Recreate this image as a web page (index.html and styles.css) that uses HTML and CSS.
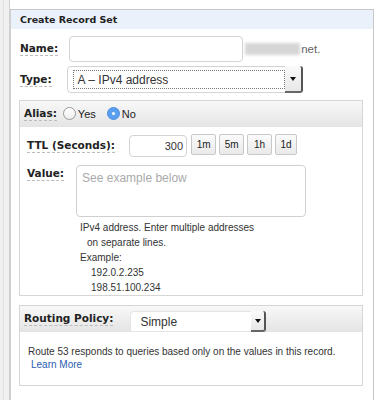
FILE: index.html
```html
<!DOCTYPE html>
<html>
<head>
<meta charset="utf-8">
<link rel="stylesheet" href="styles.css">
</head>
<body>
<div class="page">
  <div class="side"><div class="side-line"></div></div>
  <div class="main">
    <div class="panel">
      <div class="panel-head">Create Record Set</div>
      <div class="row row-name">
        <span class="label lbl-name">Name:</span>
        <div class="input name-input"></div>
        <div class="blur"></div>
        <span class="suffix">net.</span>
      </div>
      <div class="row row-type">
        <span class="label lbl-type">Type:</span>
        <div class="select type-select">
          <div class="select-text"><span class="focus">A – IPv4 address</span></div>
          <div class="select-arrow"><span class="tri"></span></div>
        </div>
      </div>
      <div class="box alias-box">
        <div class="box-head">
          <span class="label">Alias:</span>
          <span class="radio"></span><span class="rtext">Yes</span>
          <span class="radio on"></span><span class="rtext">No</span>
        </div>
        <div class="box-body">
          <div class="ttl-row">
            <span class="label lbl-ttl">TTL (Seconds):</span>
            <div class="input ttl-input">300</div>
            <div class="btns">
              <span class="btn">1m</span>
              <span class="btn">5m</span>
              <span class="btn">1h</span>
              <span class="btn b1d">1d</span>
            </div>
          </div>
          <div class="value-row">
            <span class="label lbl-value">Value:</span>
            <div class="value-col">
              <div class="textarea">See example below</div>
              <div class="help">
                <div class="h1">IPv4 address. Enter multiple addresses</div>
                <div class="h2">on separate lines.</div>
                <div class="h3">Example:</div>
                <div class="h4">192.0.2.235</div>
                <div class="h5">198.51.100.234</div>
              </div>
            </div>
          </div>
        </div>
      </div>
      <div class="box routing-box">
        <div class="box-head rhead">
          <span class="label lbl-routing">Routing Policy:</span>
          <div class="select routing-select">
            <div class="select-text">Simple</div>
            <div class="select-arrow"><span class="tri"></span></div>
          </div>
        </div>
        <div class="box-body rbody">
          <div class="rtext-line">Route 53 responds to queries based only on the values in this record.</div>
          <a class="learn" href="#">Learn More</a>
        </div>
      </div>
    </div>
  </div>
</div>
</body>
</html>
```

FILE: styles.css
```css
html, body {
  margin: 0;
  padding: 0;
  background: #fff;
}
.page {
  display: flex;
  width: 382px;
  height: 400px;
  overflow: hidden;
  font-family: "Liberation Sans", Arial, sans-serif;
  color: #333;
}
.side {
  width: 9px;
  height: 400px;
  background: #f0f0f0;
  border-right: 1px solid #d0d0d0;
  position: relative;
  flex: none;
}
.side-line {
  position: absolute;
  left: 3px;
  top: 0;
  bottom: 0;
  width: 1px;
  background: #e0e0e0;
}
.main {
  padding-top: 9px;
  flex: none;
}
.panel {
  width: 362px;
  height: 400px;
  border: 1px solid #c8c8c8;
  border-bottom: none;
  border-left-color: #d0d0d0;
}
.panel-head {
  height: 19px;
  background: #eaf1fb;
  padding-left: 9px;
  font-family: "DejaVu Sans", Verdana, sans-serif;
  font-weight: bold;
  font-size: 9.5px;
  line-height: 19px;
  color: #222;
}
.label {
  font-family: "DejaVu Sans", Verdana, sans-serif;
  font-weight: bold;
  font-size: 10.5px;
  color: #222;
  border-bottom: 1px dashed #bbb;
  line-height: 13px;
}
.row {
  display: flex;
  align-items: center;
  padding-left: 9px;
}
.row-name {
  margin-top: 7px;
  height: 26px;
}
.input {
  box-sizing: border-box;
  border: 1px solid #d4d4d4;
  border-radius: 4px;
  background: #fff;
}
.name-input {
  width: 174px;
  height: 26px;
  margin-left: 11px;
}
.blur {
  width: 55px;
  height: 12px;
  background: #d6d6d6;
  filter: blur(1.5px);
  margin-left: 2px;
}
.suffix {
  font-size: 11.5px;
  color: #666;
  margin-left: 1px;
}
.row-type {
  margin-top: 4px;
  height: 27px;
}
.lbl-type { margin-right: 15px; }
.select {
  box-sizing: border-box;
  display: flex;
  border: 1px solid #d4d4d4;
  border-radius: 4px;
  background: #fff;
  font-size: 12px;
  color: #333;
}
.type-select {
  width: 236px;
  height: 27px;
  padding: 3px 0 3px 5px;
}
.select-text {
  flex: 1;
  display: flex;
  align-items: center;
}
.focus {
  box-sizing: border-box;
  display: flex;
  align-items: center;
  width: 212px;
  height: 19px;
  border: 1px dotted #777;
  padding-left: 4px;
}
.select-arrow {
  width: 18px;
  display: flex;
  align-items: center;
  justify-content: center;
  border-right: 2px solid #555;
  border-bottom: 2px solid #666;
  border-radius: 0 3px 3px 0;
  margin: -4px -1px -4px 0;
  background: linear-gradient(#fafafa, #e8e8e8);
}
.tri {
  width: 0;
  height: 0;
  border-left: 3px solid transparent;
  border-right: 3px solid transparent;
  border-top: 4px solid #111;
}
.box {
  margin-left: 8px;
  width: 342px;
  border: 1px solid #d6d6d6;
  background: #fff;
}
.alias-box {
  margin-top: 7px;
  height: 194px;
}
.box-head {
  height: 25px;
  background: linear-gradient(#f8f8f8, #e5e5e5);
  display: flex;
  align-items: center;
  padding-left: 4px;
  border-bottom: 1px solid #e3e3e3;
}
.radio {
  box-sizing: border-box;
  width: 13px;
  height: 13px;
  border-radius: 50%;
  border: 1px solid #999;
  background: linear-gradient(#fff, #eee);
  margin-left: 6px;
  margin-right: 2px;
  display: inline-flex;
  align-items: center;
  justify-content: center;
}
.radio.on {
  border-color: #4a90e2;
  background: #5aa0f0;
  margin-left: 11px;
}
.radio.on::after {
  content: "";
  width: 3px;
  height: 3px;
  background: #fff;
  border-radius: 50%;
}
.rtext {
  font-size: 11px;
  color: #222;
}
.box-body {
  padding-left: 7px;
}
.ttl-row {
  display: flex;
  align-items: center;
  margin-top: 8px;
  height: 22px;
}
.lbl-ttl { margin-right: 14px; }
.ttl-input {
  width: 58px;
  height: 22px;
  text-align: right;
  font-size: 11px;
  line-height: 20px;
  padding-right: 3px;
  color: #333;
}
.btns {
  display: flex;
  gap: 3px;
  margin-left: 4px;
  align-self: flex-start;
  margin-top: -1px;
}
.btn {
  box-sizing: border-box;
  width: 25px;
  height: 21px;
  border: 1px solid #c8c8c8;
  border-radius: 2px;
  background: linear-gradient(#fbfbfb, #e9e9e9);
  font-size: 10px;
  display: flex;
  align-items: center;
  justify-content: center;
  color: #222;
}
.b1d { width: 22px; }
.value-row {
  display: flex;
  margin-top: 8px;
}
.lbl-value {
  align-self: flex-start;
  margin-top: 2px;
  margin-right: 12px;
}
.textarea {
  box-sizing: border-box;
  width: 230px;
  height: 52px;
  border: 1px solid #d0d0d0;
  border-radius: 4px;
  font-size: 12px;
  color: #aaa;
  padding: 5px 0 0 5px;
}
.help {
  font-size: 10px;
  color: #333;
  padding-left: 4px;
  margin-top: 3px;
}
.help div { line-height: 15px; }
.h2 { padding-left: 7px; }
.h4, .h5 { padding-left: 11px; }
.routing-box {
  margin-top: 9px;
  height: 79px;
}
.rhead { height: 25px; }
.lbl-routing { margin-right: 17px; }
.routing-select {
  width: 136px;
  height: 21px;
  align-self: flex-end;
  margin-bottom: -1px;
  padding-left: 9px;
  border-radius: 4px 4px 0 0;
  border-color: #e4e4e4;
}
.routing-select .select-arrow {
  width: 13px;
  margin: -1px -1px -1px 0;
}
.rbody {
  padding-top: 13px;
  padding-left: 8px;
}
.rtext-line {
  font-size: 10px;
  color: #333;
  line-height: 14px;
}
.learn {
  display: block;
  font-size: 10px;
  color: #2a5db0;
  text-decoration: none;
  padding-left: 3px;
  line-height: 14px;
  margin-top: -1px;
}
```
